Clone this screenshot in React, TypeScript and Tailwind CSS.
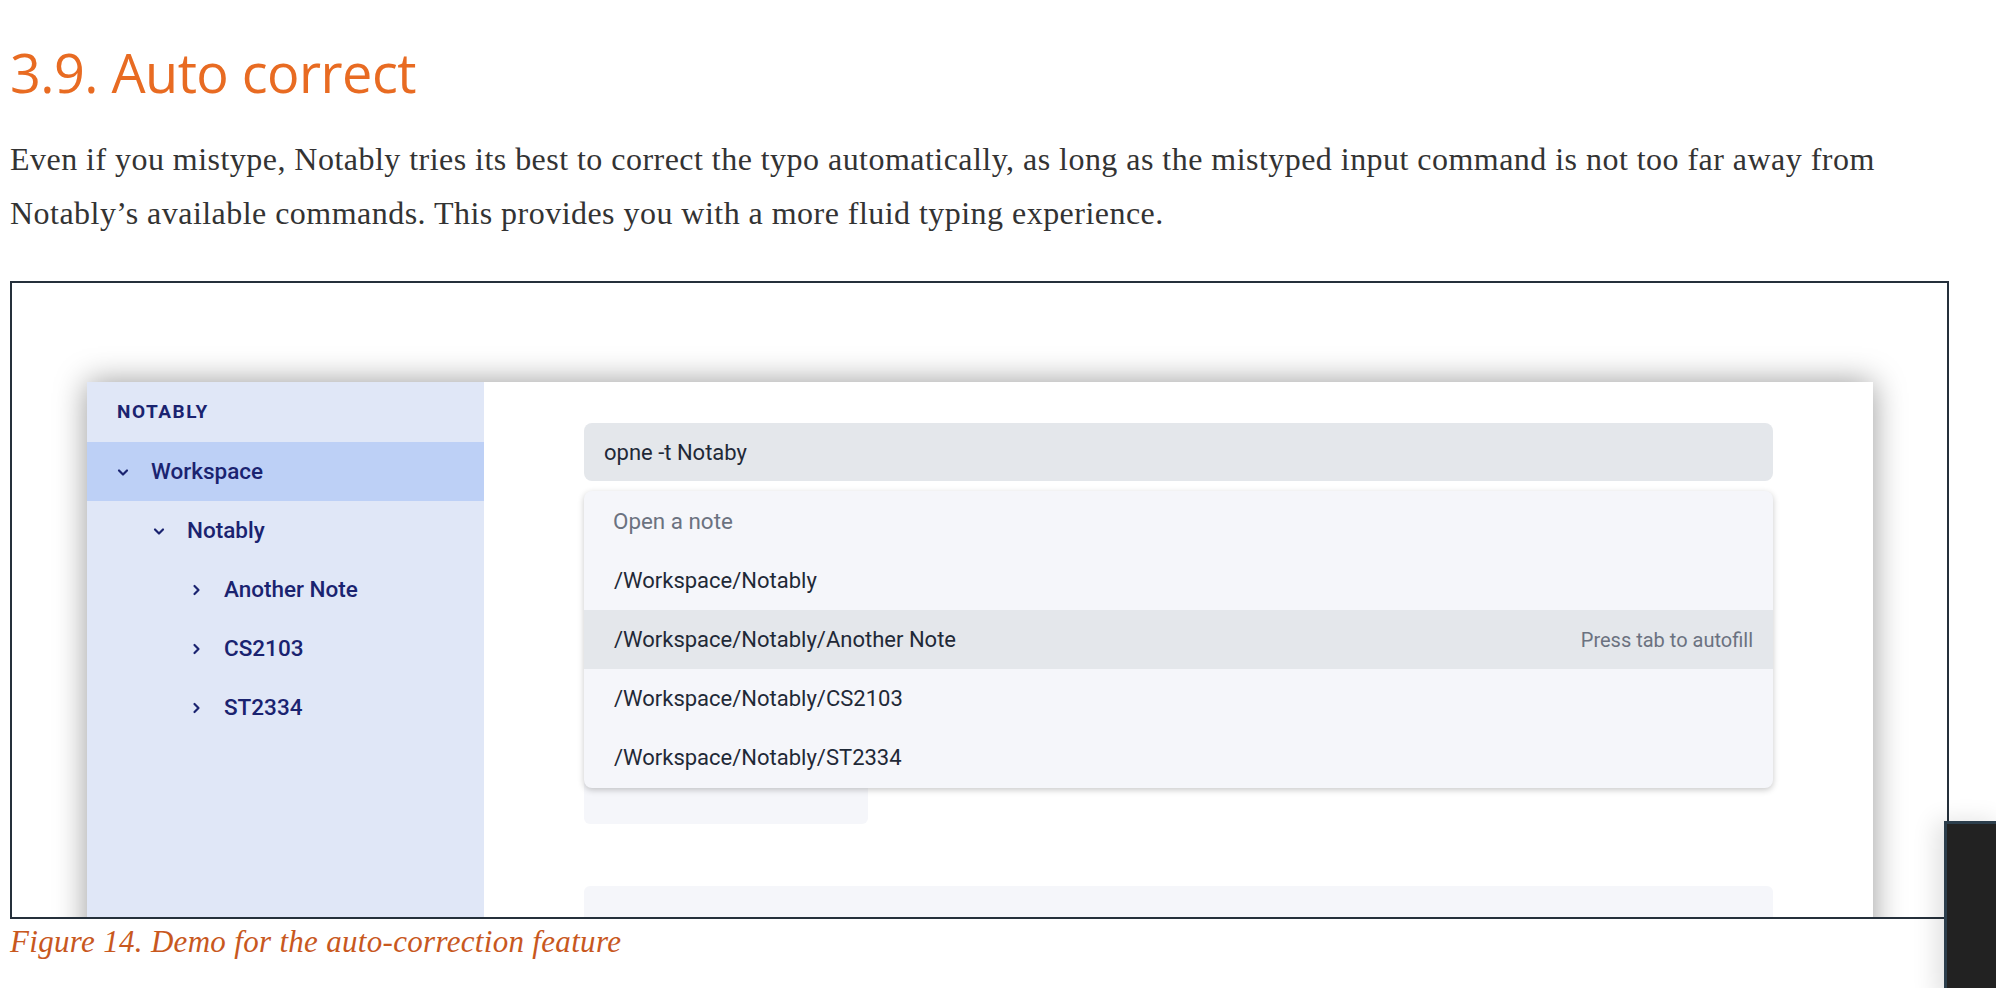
import React from "react";

const tree = [
  { label: "Workspace", depth: 0, open: true, active: true },
  { label: "Notably", depth: 1, open: true, active: false },
  { label: "Another Note", depth: 2, open: false, active: false },
  { label: "CS2103", depth: 2, open: false, active: false },
  { label: "ST2334", depth: 2, open: false, active: false },
];

const indent = ["pl-[29px]", "pl-[65px]", "pl-[102px]"];

const options = [
  "/Workspace/Notably",
  "/Workspace/Notably/Another Note",
  "/Workspace/Notably/CS2103",
  "/Workspace/Notably/ST2334",
];

function Chevron({ open }: { open: boolean }) {
  return (
    <svg width="14" height="14" viewBox="0 0 14 14" className="shrink-0">
      <path
        d={open ? "M3 5.5 L7 9.5 L11 5.5" : "M5.5 3 L9.5 7 L5.5 11"}
        fill="none"
        stroke="#1a2370"
        strokeWidth="2.2"
        strokeLinecap="round"
        strokeLinejoin="round"
      />
    </svg>
  );
}

function Sidebar() {
  return (
    <div className="w-[397px] shrink-0 bg-[#e0e7f7] font-['Roboto',sans-serif] text-[#1a2370]">
      <div className="flex h-[60px] items-center pl-[30px] text-[19px] font-bold tracking-[0.08em]">
        NOTABLY
      </div>
      {tree.map((item) => (
        <div
          key={item.label}
          className={`flex h-[59px] items-center gap-[21px] text-[22.5px] font-medium ${indent[item.depth]} ${
            item.active ? "bg-[#bdd0f6]" : ""
          }`}
        >
          <Chevron open={item.open} />
          <span>{item.label}</span>
        </div>
      ))}
    </div>
  );
}

function Palette() {
  return (
    <div className="relative flex-1 px-[100px] pt-[41px] font-['Roboto',sans-serif]">
      <div className="flex h-[58px] items-center rounded-lg bg-[#e4e7eb] px-[20px] text-[22px] text-[#1f2937]">
        opne -t Notaby
      </div>
      <div className="mt-[289px] h-[54px] w-[284px] rounded-md bg-[#f5f6fa]" />
      <div className="mt-[62px] h-[120px] rounded-md bg-[#f5f6fa]" />

      <div className="absolute left-[100px] right-[100px] top-[109px] rounded-lg bg-[#f5f6fa] py-[1px] shadow-[0_2px_6px_rgba(0,0,0,0.22)]">
        <div className="flex h-[59px] items-center pl-[29px] text-[22.4px] text-[#6b7280]">
          Open a note
        </div>
        {options.map((opt, i) => (
          <div
            key={opt}
            className={`flex h-[59px] items-center justify-between pl-[30px] pr-[20px] text-[22px] text-[#1f2937] ${
              i === 1 ? "bg-[#e4e7eb]" : ""
            }`}
          >
            <span>{opt}</span>
            {i === 1 && (
              <span className="text-[20px] text-[#6b7280]">Press tab to autofill</span>
            )}
          </div>
        ))}
      </div>
    </div>
  );
}

export default function App() {
  return (
    <div className="relative h-[988px] w-[1996px] overflow-hidden bg-white">
      <div className="pl-[10px] pt-[45px]">
        <h2 className="font-['Open_Sans',sans-serif] text-[54px] leading-none tracking-[-0.01em] text-[#e86b22]">
          3.9. Auto correct
        </h2>
        <p className="mt-[34px] w-[1900px] font-['Liberation_Serif',serif] text-[32px] leading-[53.5px] tracking-[0.0145em] text-[#333333]">
          Even if you mistype, Notably tries its best to correct the typo automatically, as long as
          the mistyped input command is not too far away from Notably’s available commands. This
          provides you with a more fluid typing experience.
        </p>
        <div className="mt-[41px] h-[638px] w-[1939px] overflow-hidden border-2 border-[#25303b] pl-[75px] pt-[99px]">
          <div className="flex h-[700px] w-[1786px] bg-white shadow-[0_0_30px_rgba(0,0,0,0.4)]">
            <Sidebar />
            <Palette />
          </div>
        </div>
        <div className="mt-[3px] font-['Liberation_Serif',serif] text-[31px] italic leading-[40px] tracking-[0.01em] text-[#c8581e]">
          Figure 14. Demo for the auto-correction feature
        </div>
      </div>
      <div className="absolute left-[1944px] top-[821px] h-[180px] w-[60px] border-l-[3px] border-t-[3px] border-[#2c3e4c] bg-[#222222] shadow-[-8px_0_24px_rgba(0,0,0,0.12)]" />
    </div>
  );
}
